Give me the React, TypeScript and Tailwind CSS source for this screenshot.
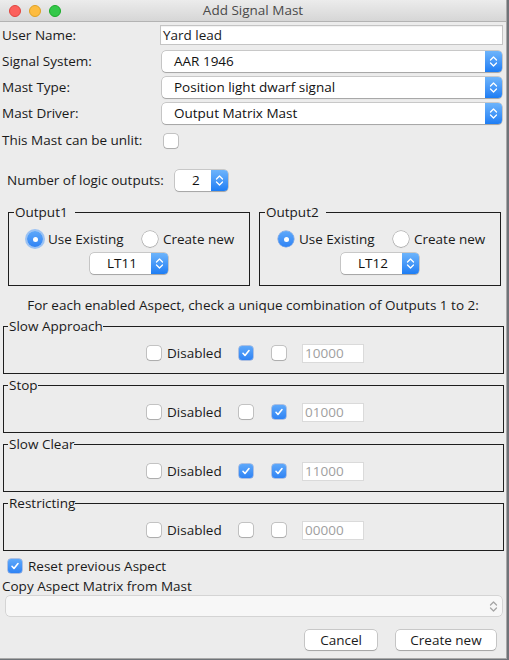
import React from 'react';

function Chevrons({ color = '#ffffff' }: { color?: string }) {
  return (
    <svg width="9" height="13" viewBox="0 0 9 13" fill="none">
      <path d="M1.5 5 L4.5 2 L7.5 5" stroke={color} strokeWidth="1.3" strokeLinecap="round" strokeLinejoin="round" />
      <path d="M1.5 8 L4.5 11 L7.5 8" stroke={color} strokeWidth="1.3" strokeLinecap="round" strokeLinejoin="round" />
    </svg>
  );
}

interface ComboProps {
  text: string;
  className?: string;
  pad?: string;
}

function Combo({ text, className = '', pad = 'pl-[12px]' }: ComboProps) {
  return (
    <div
      className={`flex h-[21px] rounded-[4px] bg-white shadow-[0_0_0_0.5px_rgba(0,0,0,0.3),0_1px_1px_rgba(0,0,0,0.18)] overflow-hidden ${className}`}
    >
      <span className={`flex-1 leading-[21px] text-[#111] ${pad}`}>{text}</span>
      <span className="w-[17px] flex items-center justify-center bg-linear-to-b from-[#6db4fb] to-[#1c7df4]">
        <Chevrons />
      </span>
    </div>
  );
}

function CheckBox({ checked = false }: { checked?: boolean }) {
  if (checked) {
    return (
      <span className="w-[14px] h-[14px] shrink-0 rounded-[3px] bg-linear-to-b from-[#5ea8fa] to-[#2f83f4] shadow-[0_0_0_0.5px_rgba(30,90,200,0.6)] flex items-center justify-center">
        <svg width="10" height="10" viewBox="0 0 10 10" fill="none">
          <path d="M2 5.3 L4 7.5 L8 2.5" stroke="#fff" strokeWidth="1.6" strokeLinecap="round" strokeLinejoin="round" />
        </svg>
      </span>
    );
  }
  return (
    <span className="block w-[14px] h-[14px] shrink-0 rounded-[3px] bg-white shadow-[0_0_0_0.5px_rgba(0,0,0,0.35),0_1px_1px_rgba(0,0,0,0.12)]" />
  );
}

function Radio({ selected = false, focus = false }: { selected?: boolean; focus?: boolean }) {
  if (selected) {
    return (
      <span
        className={`w-[16px] h-[16px] shrink-0 rounded-full bg-linear-to-b from-[#5ea8fa] to-[#2f83f4] flex items-center justify-center ${
          focus ? 'shadow-[0_0_0_2px_rgba(90,160,250,0.55)]' : 'shadow-[0_0_0_0.5px_rgba(30,90,200,0.6)]'
        }`}
      >
        <span className="w-[5px] h-[5px] rounded-full bg-white" />
      </span>
    );
  }
  return (
    <span className="block w-[16px] h-[16px] shrink-0 rounded-full bg-white shadow-[0_0_0_0.5px_rgba(0,0,0,0.35),0_1px_1px_rgba(0,0,0,0.12)]" />
  );
}

function OutputBox({ title, lt, focus }: { title: string; lt: string; focus?: boolean }) {
  return (
    <fieldset className="w-[242px] border border-[#1e1e1e] pb-[11px]">
      <legend className="ml-[5px] pl-[1px] pr-[7px] leading-[17px]">{title}</legend>
      <div className="flex items-center h-[20px] mt-[8px] pl-[18px]">
        <Radio selected focus={focus} />
        <span className="ml-[5px] w-[94px]">Use Existing</span>
        <Radio />
        <span className="ml-[5px]">Create new</span>
      </div>
      <div className="flex justify-center mt-[4px]">
        <Combo text={lt} className="w-[78px] h-[20px]" pad="pl-[17px]" />
      </div>
    </fieldset>
  );
}

function AspectBox({ title, a, b, code }: { title: string; a: boolean; b: boolean; code: string }) {
  return (
    <fieldset className="w-[501px] border border-[#1e1e1e]">
      <legend className="ml-[4px] pl-[1px] leading-[17px]">{title}</legend>
      <div className="flex items-center h-[20px] mt-[8px] mb-[10px] pl-[143px]">
        <CheckBox />
        <span className="ml-[6px] w-[72px]">Disabled</span>
        <CheckBox checked={a} />
        <span className="ml-[19px]">
          <CheckBox checked={b} />
        </span>
        <span className="ml-[16px] w-[62px] h-[19px] bg-white border border-[#dadada] pl-[2px] leading-[17px] text-[#a0a0a0]">
          {code}
        </span>
      </div>
    </fieldset>
  );
}

const aspects = [
  { title: 'Slow Approach', a: true, b: false, code: '10000' },
  { title: 'Stop', a: false, b: true, code: '01000' },
  { title: 'Slow Clear', a: true, b: true, code: '11000' },
  { title: 'Restricting', a: false, b: false, code: '00000' },
];

export default function App() {
  return (
    <div className="w-[509px] h-[660px] bg-[#6f7378] overflow-hidden font-['Open_Sans',sans-serif] text-[13.5px] text-[#1a1a1a]">
      <div className="w-[507px] h-[659px] bg-[#ececec] border-r border-b border-[#a9a9a9] flex flex-col">
        {/* title bar */}
        <div className="h-[22px] shrink-0 flex items-center bg-linear-to-b from-[#ececec] to-[#d6d6d6] border-b border-[#b3b3b3]">
          <div className="flex gap-[8px] pl-[9px] w-[61px]">
            <span className="w-[12px] h-[12px] rounded-full bg-[#fc605c] border border-[#e0443e]" />
            <span className="w-[12px] h-[12px] rounded-full bg-[#fdbc40] border border-[#dea123]" />
            <span className="w-[12px] h-[12px] rounded-full bg-[#34c84a] border border-[#1aab29]" />
          </div>
          <div className="flex-1 text-center text-[#4a4a4a]">Add Signal Mast</div>
          <div className="w-[61px]" />
        </div>

        {/* top form */}
        <div className="flex items-center h-[26px]">
          <span className="w-[160px] pl-[2px]">User Name:</span>
          <div className="w-[343px] h-[20px] bg-white border border-[#c4c4c4] pl-[2px] leading-[18px] shadow-[inset_0_1px_1px_rgba(0,0,0,0.06)]">
            Yard lead
          </div>
        </div>
        <div className="flex items-center h-[26px]">
          <span className="w-[162px] pl-[2px]">Signal System:</span>
          <Combo text="AAR 1946" className="w-[340px]" />
        </div>
        <div className="flex items-center h-[26px]">
          <span className="w-[162px] pl-[2px]">Mast Type:</span>
          <Combo text="Position light dwarf signal" className="w-[340px]" />
        </div>
        <div className="flex items-center h-[27px]">
          <span className="w-[162px] pl-[2px]">Mast Driver:</span>
          <Combo text="Output Matrix Mast" className="w-[340px]" />
        </div>
        <div className="flex items-center h-[27px]">
          <span className="w-[164px] pl-[2px]">This Mast can be unlit:</span>
          <CheckBox />
        </div>

        <div className="flex items-center h-[26px] mt-[13px] pl-[7px]">
          <span className="w-[168px]">Number of logic outputs:</span>
          <Combo text="2" className="w-[53px] h-[20px]" pad="pl-[17px]" />
        </div>

        {/* outputs */}
        <div className="flex gap-[9px] pl-[8px] mt-[11px]">
          <OutputBox title="Output1" lt="LT11" focus />
          <OutputBox title="Output2" lt="LT12" />
        </div>

        <div className="text-center leading-[17px] mt-[11px]">
          For each enabled Aspect, check a unique combination of Outputs 1 to 2:
        </div>

        {/* aspects */}
        <div className="flex flex-col gap-[3px] pl-[3px] mt-[4px]">
          {aspects.map((a) => (
            <AspectBox key={a.title} title={a.title} a={a.a} b={a.b} code={a.code} />
          ))}
        </div>

        <div className="flex items-center h-[20px] mt-[5px] pl-[8px]">
          <CheckBox checked />
          <span className="ml-[6px]">Reset previous Aspect</span>
        </div>
        <div className="leading-[17px] mt-[2px] pl-[2px]">Copy Aspect Matrix from Mast</div>
        <div className="flex h-[20px] mt-[1px] ml-[6px] w-[496px] rounded-[4px] bg-[#f7f7f7] shadow-[0_0_0_0.5px_rgba(0,0,0,0.2)]">
          <span className="flex-1" />
          <span className="w-[17px] flex items-center justify-center">
            <Chevrons color="#a5a5a5" />
          </span>
        </div>

        <div className="flex justify-end gap-[19px] pr-[10px] mt-[14px]">
          <button className="w-[72px] h-[20px] rounded-[4px] bg-white leading-[20px] text-[#1a1a1a] shadow-[0_0_0_0.5px_rgba(0,0,0,0.3),0_1px_1px_rgba(0,0,0,0.18)]">
            Cancel
          </button>
          <button className="w-[100px] h-[20px] rounded-[4px] bg-white leading-[20px] text-[#1a1a1a] shadow-[0_0_0_0.5px_rgba(0,0,0,0.3),0_1px_1px_rgba(0,0,0,0.18)]">
            Create new
          </button>
        </div>
      </div>
    </div>
  );
}
